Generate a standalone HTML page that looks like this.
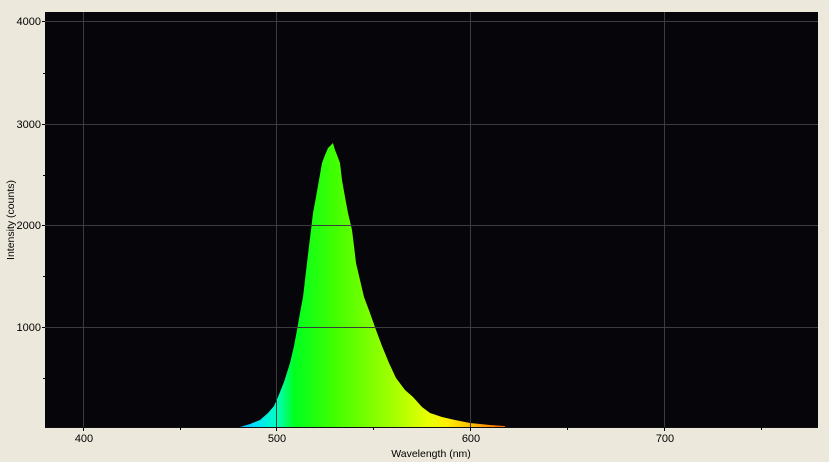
<!DOCTYPE html>
<html><head><style>html,body{margin:0;padding:0;background:#ece9dc;}svg{display:block}</style></head><body>
<svg width="829" height="462" xmlns="http://www.w3.org/2000/svg" font-family="Liberation Sans, sans-serif" font-size="11">
<defs>
<linearGradient id="g" gradientUnits="userSpaceOnUse" x1="220" y1="0" x2="505" y2="0">
<stop offset="0" stop-color="#0070ff"/>
<stop offset="0.12" stop-color="#00e0ff"/>
<stop offset="0.2" stop-color="#00ffc0"/>
<stop offset="0.26" stop-color="#00ff20"/>
<stop offset="0.4" stop-color="#40ff00"/>
<stop offset="0.6" stop-color="#a0ff00"/>
<stop offset="0.73" stop-color="#e8ff00"/>
<stop offset="0.8" stop-color="#ffee00"/>
<stop offset="0.9" stop-color="#ffb000"/>
<stop offset="1" stop-color="#ff6000"/>
</linearGradient>
</defs>
<rect x="0" y="0" width="829" height="462" fill="#ece9dc"/>
<rect x="45" y="12" width="773" height="416" fill="#060509"/>
<path fill="url(#g)" d="M220,428 L240,427 L250,424 L260,420 L268,413 L274,406 L278,397 L284,382 L290,363 L294,346 L297,330 L300,313 L303,297 L305,280 L307,263 L309,246 L311,230 L313,213 L316,197 L319,180 L322,163 L325,155 L328,148 L331,145 L333,143 L335,150 L337,155 L340,163 L342,180 L345,197 L348,213 L352,230 L354,246 L356,263 L360,280 L364,297 L370,313 L376,330 L382,346 L389,363 L396,378 L405,390 L413,397 L422,407 L430,413 L442,417 L455,420 L470,423 L490,425 L505,426 L505,428 Z"/>
<g stroke="#3c3b3e" stroke-width="1">
<line x1="83.5" y1="12" x2="83.5" y2="428"/>
<line x1="276.5" y1="12" x2="276.5" y2="428"/>
<line x1="470.5" y1="12" x2="470.5" y2="428"/>
<line x1="664.5" y1="12" x2="664.5" y2="428"/>
<line x1="45" y1="21.5" x2="818" y2="21.5"/>
<line x1="45" y1="124.5" x2="818" y2="124.5"/>
<line x1="45" y1="225.5" x2="818" y2="225.5"/>
<line x1="45" y1="327.5" x2="818" y2="327.5"/>
</g>
<line x1="45" y1="427.5" x2="818" y2="427.5" stroke="#111" />
<g stroke="#000" stroke-width="1">
<line x1="42" y1="21.5" x2="45" y2="21.5"/>
<line x1="42" y1="124.5" x2="45" y2="124.5"/>
<line x1="42" y1="225.5" x2="45" y2="225.5"/>
<line x1="42" y1="327.5" x2="45" y2="327.5"/>
<line x1="43" y1="73.5" x2="45" y2="73.5"/>
<line x1="43" y1="175.5" x2="45" y2="175.5"/>
<line x1="43" y1="276.5" x2="45" y2="276.5"/>
<line x1="43" y1="378.5" x2="45" y2="378.5"/>
<line x1="83.5" y1="428" x2="83.5" y2="431"/>
<line x1="276.5" y1="428" x2="276.5" y2="431"/>
<line x1="470.5" y1="428" x2="470.5" y2="431"/>
<line x1="664.5" y1="428" x2="664.5" y2="431"/>
<line x1="180.5" y1="428" x2="180.5" y2="430"/>
<line x1="373.5" y1="428" x2="373.5" y2="430"/>
<line x1="567.5" y1="428" x2="567.5" y2="430"/>
<line x1="761.5" y1="428" x2="761.5" y2="430"/>
</g>
<g fill="#000" text-anchor="end">
<text x="41" y="25">4000</text>
<text x="41" y="128">3000</text>
<text x="41" y="229">2000</text>
<text x="41" y="331">1000</text>
</g>
<g fill="#000" text-anchor="middle">
<text x="84" y="442">400</text>
<text x="277" y="442">500</text>
<text x="471" y="442">600</text>
<text x="665" y="442">700</text>
<text x="431" y="457" font-size="10.5">Wavelength (nm)</text>
<text transform="translate(14,220) rotate(-90)" font-size="10.5">Intensity (counts)</text>
</g>
</svg>
</body></html>
